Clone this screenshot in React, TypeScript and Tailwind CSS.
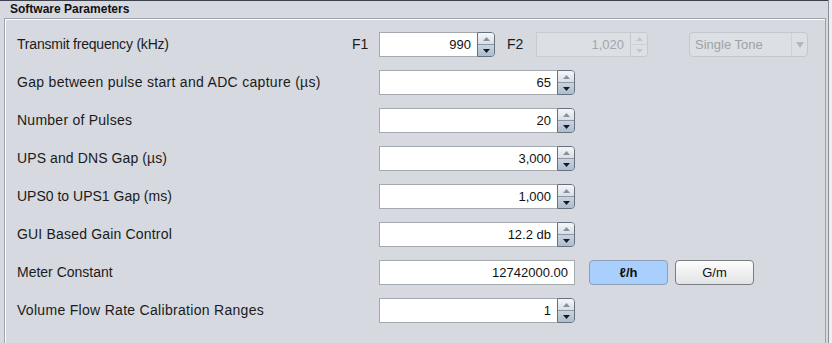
const Up = ({ off }: { off?: boolean }) => (
  <svg width="7" height="4" viewBox="0 0 7 4">
    <polygon points="0,4 7,4 3.5,0" fill={off ? "#c3c7cd" : "#8b9098"} />
  </svg>
);

const Down = ({ off }: { off?: boolean }) => (
  <svg width="7" height="4" viewBox="0 0 7 4">
    <polygon points="0,0 7,0 3.5,4" fill={off ? "#c3c7cd" : "#141b26"} />
  </svg>
);

const Spinner = ({ off }: { off?: boolean }) => (
  <div
    className={`flex h-full w-[18px] flex-col overflow-hidden rounded-r-[4px] border ${
      off ? "border-[#c6cad0]" : "border-[#66717f]"
    }`}
  >
    <div
      className={`flex flex-1 items-center justify-center border-b ${
        off
          ? "border-[#cfd3d8] bg-[#dde0e5]"
          : "border-[#8e98a5] bg-linear-to-b from-[#f4f6f9] to-[#d9dfe6]"
      }`}
    >
      <Up off={off} />
    </div>
    <div
      className={`flex flex-1 items-center justify-center ${
        off ? "bg-[#dde0e5]" : "bg-linear-to-b from-[#c9d4df] to-[#aebdcc]"
      }`}
    >
      <Down off={off} />
    </div>
  </div>
);

const NumField = ({
  value,
  width,
  off,
  spin = true,
}: {
  value: string;
  width: string;
  off?: boolean;
  spin?: boolean;
}) => (
  <div className={`flex h-[25px] ${width}`}>
    <div
      className={`flex flex-1 items-center justify-end border pr-[6px] text-[13px] ${
        off
          ? "border-[#c8ccd2] bg-[#dcdfe4] text-[#a3a7ad]"
          : "border-[#a5a9b0] bg-white text-[#111]"
      } ${spin ? "border-r-0" : ""}`}
    >
      {value}
    </div>
    {spin && <Spinner off={off} />}
  </div>
);

const Row = ({
  label,
  track = "",
  children,
}: {
  label: string;
  track?: string;
  children: React.ReactNode;
}) => (
  <div className="flex h-[25px] items-center">
    <div className={`w-[362px] shrink-0 text-[14px] text-[#1b1b1b] ${track}`}>{label}</div>
    {children}
  </div>
);

export default function App() {
  return (
    <div className="flex h-[343px] w-[832px] overflow-hidden bg-[#d6d9df] font-['Liberation_Sans',Arial,sans-serif]">
      <div className="flex w-[828px] flex-col">
        <div className="h-px bg-[#3b404a]" />
        <div className="h-[17px] pl-[10px] text-[12px] font-bold leading-[17px] text-[#111]">
          Software Parameters
        </div>
        <div className="ml-[4px] mr-[2px] flex-1 border-l border-t border-r border-[#9ea2a9]">
          <div className="flex h-full flex-col gap-[13px] border-l border-t border-white pl-[11px] pt-[12px]">
            <div className="flex h-[25px] items-center">
              <div className="w-[335px] shrink-0 text-[14px] tracking-[-0.2px] text-[#1b1b1b]">
                Transmit frequency (kHz)
              </div>
              <div className="w-[27px] text-[14px] text-[#1b1b1b]">F1</div>
              <NumField value="990" width="w-[116px]" />
              <div className="ml-[12px] w-[29px] text-[14px] text-[#1b1b1b]">F2</div>
              <NumField value="1,020" width="w-[112px]" off />
              <div className="ml-[41px] flex h-[25px] w-[119px] items-center rounded-[4px] border border-[#c4c8ce] bg-[#dcdfe4]">
                <div className="flex-1 pl-[5px] text-[13px] text-[#9ea2a9]">Single Tone</div>
                <div className="flex h-full w-[16px] items-center justify-center border-l border-[#cdd1d6]">
                  <svg width="8" height="6" viewBox="0 0 8 6">
                    <polygon points="0,0 8,0 4,6" fill="#b4b8be" />
                  </svg>
                </div>
              </div>
            </div>
            <Row label="Gap between pulse start and ADC capture (µs)" track="tracking-[0.3px]">
              <NumField value="65" width="w-[196px]" />
            </Row>
            <Row label="Number of Pulses" track="tracking-[0.25px]">
              <NumField value="20" width="w-[196px]" />
            </Row>
            <Row label="UPS and DNS Gap (µs)" track="tracking-[0.1px]">
              <NumField value="3,000" width="w-[196px]" />
            </Row>
            <Row label="UPS0 to UPS1 Gap (ms)">
              <NumField value="1,000" width="w-[196px]" />
            </Row>
            <Row label="GUI Based Gain Control" track="tracking-[0.18px]">
              <NumField value="12.2 db" width="w-[196px]" />
            </Row>
            <Row label="Meter Constant">
              <NumField value="12742000.00" width="w-[196px]" spin={false} />
              <button className="ml-[14px] h-[25px] w-[79px] rounded-[4px] border border-[#8d9fb8] bg-[#a9cffc] text-[13px] font-bold text-[#111]">
                ℓ/h
              </button>
              <button className="ml-[7px] h-[25px] w-[79px] rounded-[4px] border border-[#7a7d82] bg-linear-to-b from-[#fdfdfd] to-[#e2e3e5] text-[13px] text-[#111]">
                G/m
              </button>
            </Row>
            <Row label="Volume Flow Rate Calibration Ranges" track="tracking-[0.3px]">
              <NumField value="1" width="w-[196px]" />
            </Row>
          </div>
        </div>
      </div>
      <div className="w-[4px] border-l border-[#8b9098] bg-[#eceef1]" />
    </div>
  );
}
